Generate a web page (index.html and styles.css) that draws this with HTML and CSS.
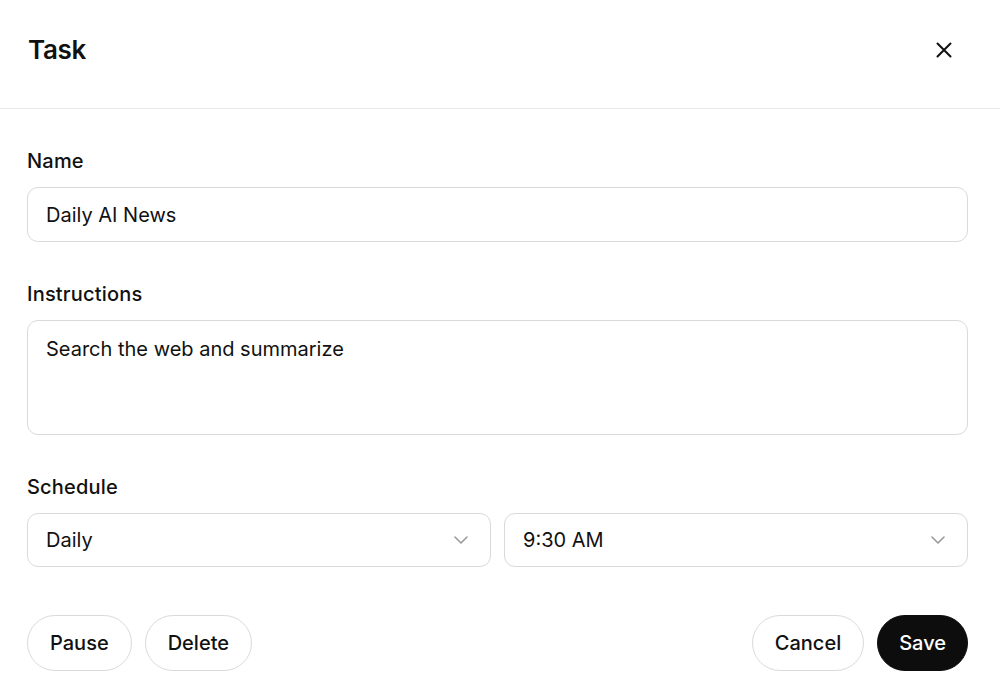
FILE: index.html
```html
<!DOCTYPE html>
<html lang="en">
<head>
    <meta charset="UTF-8">
    <meta name="viewport" content="width=device-width, initial-scale=1.0">
    <title>Task</title>
    <link rel="stylesheet" href="styles.css">
</head>
<body>
    <div class="dialog">
        <div class="header">
            <h1 class="title">Task</h1>
            <button class="close-btn" aria-label="Close">
                <svg width="16" height="16" viewBox="0 0 16 16" fill="none" stroke="#111" stroke-width="2" stroke-linecap="round">
                    <path d="M1.5 1.5 L14.5 14.5 M14.5 1.5 L1.5 14.5"/>
                </svg>
            </button>
        </div>

        <div class="content">
            <div class="field">
                <label for="taskName">Name</label>
                <input type="text" id="taskName" class="text-input" value="Daily AI News">
            </div>

            <div class="field">
                <label for="taskInstructions">Instructions</label>
                <textarea id="taskInstructions" class="text-area">Search the web and summarize</textarea>
            </div>

            <div class="field">
                <label for="scheduleFreq">Schedule</label>
                <div class="schedule-row">
                    <div class="select-wrap">
                        <select id="scheduleFreq">
                            <option>Daily</option>
                            <option>Weekly</option>
                            <option>Monthly</option>
                        </select>
                        <svg class="chevron" width="14" height="8" viewBox="0 0 14 8" fill="none" stroke="#9a9a9a" stroke-width="1.6" stroke-linecap="round" stroke-linejoin="round">
                            <path d="M1 1 L7 7 L13 1"/>
                        </svg>
                    </div>
                    <div class="select-wrap">
                        <select id="scheduleTime">
                            <option>9:30 AM</option>
                            <option>10:00 AM</option>
                        </select>
                        <svg class="chevron" width="14" height="8" viewBox="0 0 14 8" fill="none" stroke="#9a9a9a" stroke-width="1.6" stroke-linecap="round" stroke-linejoin="round">
                            <path d="M1 1 L7 7 L13 1"/>
                        </svg>
                    </div>
                </div>
            </div>

            <div class="footer">
                <div class="btn-group">
                    <button class="btn">Pause</button>
                    <button class="btn">Delete</button>
                </div>
                <div class="btn-group">
                    <button class="btn">Cancel</button>
                    <button class="btn btn-primary">Save</button>
                </div>
            </div>
        </div>
    </div>
</body>
</html>
```

FILE: styles.css
```css
body {
    font-family: Inter, "Noto Sans", sans-serif;
    margin: 0;
    padding: 0;
    background: #ffffff;
    color: #111111;
}
.dialog {
    width: 1000px;
}
.header {
    display: flex;
    align-items: center;
    justify-content: space-between;
    box-sizing: border-box;
    height: 109px;
    padding: 0 44px 8px 28px;
    border-bottom: 1.5px solid #e8e8e8;
}
.title {
    font-size: 26px;
    font-weight: 600;
    line-height: 32px;
    margin: 0;
    letter-spacing: -0.3px;
}
.close-btn {
    width: 24px;
    height: 24px;
    padding: 0;
    border: none;
    background: transparent;
    cursor: pointer;
    display: flex;
    align-items: center;
    justify-content: center;
}
.content {
    padding: 40px 32px 0 27px;
}
.field {
    display: flex;
    flex-direction: column;
    margin-bottom: 40px;
}
.field label {
    font-size: 20px;
    font-weight: 500;
    line-height: 24px;
    letter-spacing: 0.2px;
    margin-bottom: 14px;
}
.text-input,
.text-area,
.select-wrap select {
    font-family: inherit;
    font-size: 20px;
    color: #111111;
    border: 1px solid #dadada;
    border-radius: 11px;
    background: #ffffff;
    outline: none;
    box-sizing: border-box;
}
.text-input {
    height: 55px;
    padding: 0 18px;
}
.text-area {
    height: 115px;
    padding: 15px 18px;
    line-height: 26px;
    resize: none;
}
.schedule-row {
    display: grid;
    grid-template-columns: 1fr 1fr;
    gap: 13px;
}
.select-wrap {
    position: relative;
}
.select-wrap select {
    width: 100%;
    height: 54px;
    padding: 0 18px;
    -webkit-appearance: none;
    appearance: none;
    cursor: pointer;
}
.chevron {
    position: absolute;
    right: 23px;
    top: 23px;
    pointer-events: none;
}
.footer {
    display: flex;
    justify-content: space-between;
    margin-top: 48px;
}
.btn-group {
    display: flex;
    gap: 13px;
}
.btn {
    font-family: inherit;
    font-size: 20px;
    font-weight: 500;
    color: #111111;
    height: 56px;
    padding: 0 22px;
    border: 1px solid #dadada;
    border-radius: 28px;
    background: #ffffff;
    cursor: pointer;
}
.btn-primary {
    padding: 0 21px;
    background: #0d0d0d;
    border-color: #0d0d0d;
    color: #ffffff;
}
```
